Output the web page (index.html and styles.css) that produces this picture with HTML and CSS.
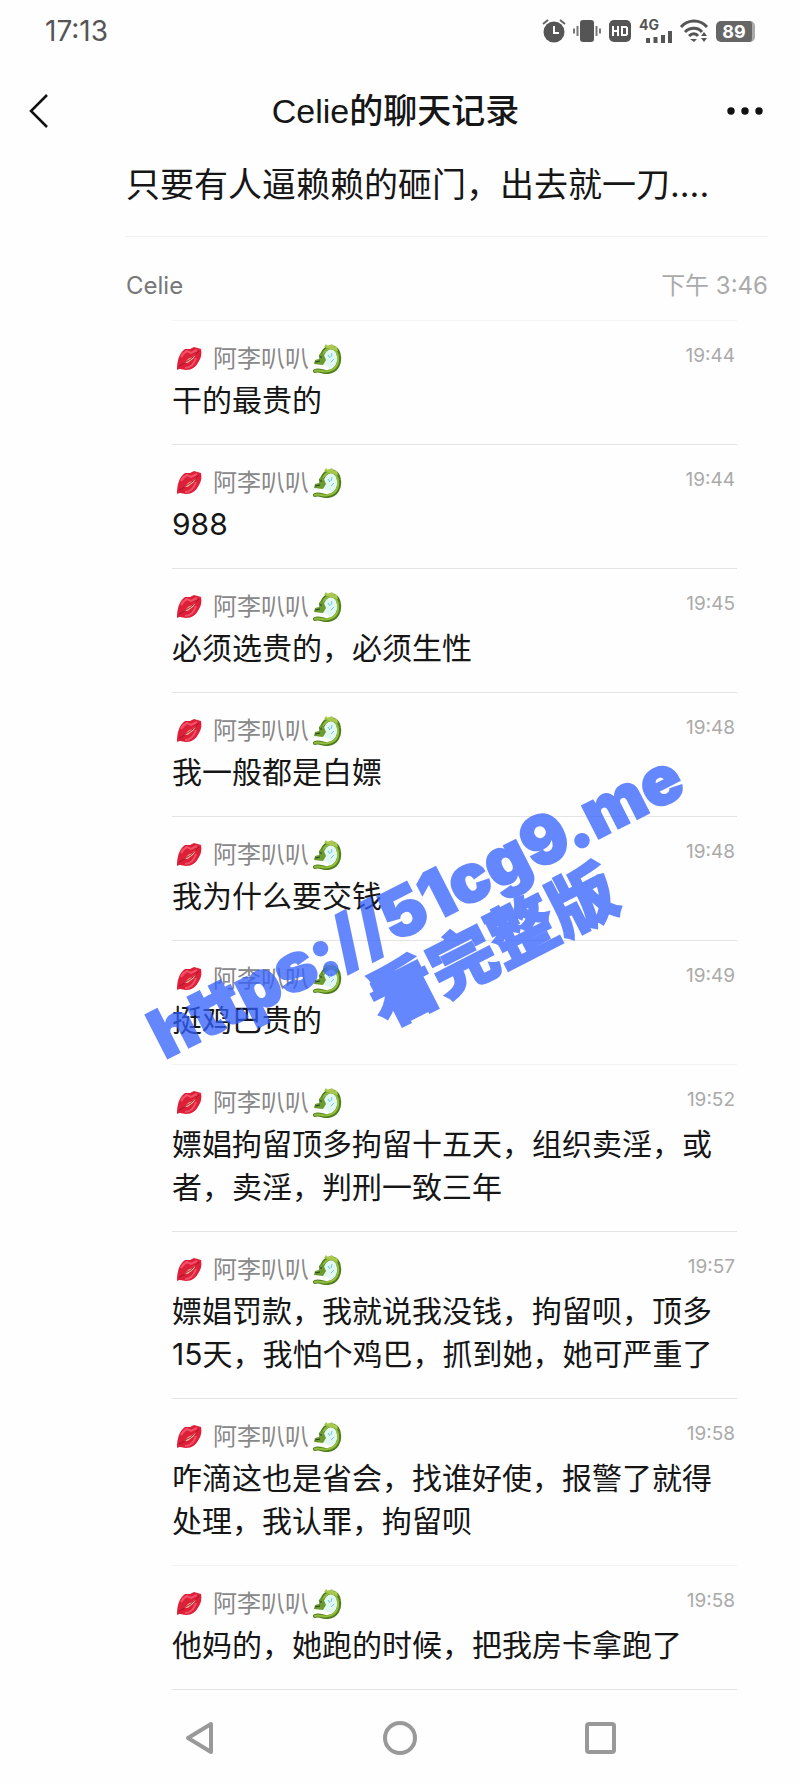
FILE: index.html
```html
<!DOCTYPE html>
<html lang="zh-CN">
<head>
<meta charset="utf-8">
<meta name="viewport" content="width=device-width, initial-scale=1">
<title>Celie的聊天记录</title>
<link rel="stylesheet" href="styles.css">
</head>
<body>
<svg class="sprite" aria-hidden="true">
  <symbol id="lips" viewBox="0 0 26 26">
    <path d="M1 24C1 15 3 7 9 3l5 0 4-2 7 2c1 5 0 9-2 12-3 6-7 9-13 9-4 0-5-2-9 0z" fill="#dd2038"/>
    <path d="M5 11c2-4 4-5 6-6l4 2 6-3M9 22c6 0 9-4 11-10" fill="none" stroke="#f3506a" stroke-width="2"/>
    <path d="M8 17c2-1 3-4 6-5 3 0 3-3 6-4-2 4-4 6-6 7-2 2-3 2-6 2z" fill="#f9c9a8"/>
    <path d="M3 20c4-1 7-5 10-6s5-5 10-9" fill="none" stroke="#a80f25"/>
  </symbol>
  <symbol id="dragon" viewBox="0 0 30 30">
    <path d="M11 7l11-3 4 11-6 10-9-4z" fill="#e2f7f2"/>
    <path d="M2 27c5-2 8 2 13 1 9-1 12-9 11-16C25 3 17 1 12 6c-2 2-2 4-4 6" fill="none" stroke="#4e7d1e" stroke-width="4" stroke-linecap="round"/>
    <path d="M2 27c5-2 8 2 13 0 8-1 11-8 10-14C24 4 17 2 13 6c-2 2-3 4-5 6" fill="none" stroke="#93bd3c" stroke-width="2" stroke-linecap="round"/>
    <path d="M10 9l3 7-3 5-9-1 1-4 4-1 1-5z" fill="#6b9a30"/>
    <path d="M2 18l5-1M7 13h2" stroke="#26431a" stroke-width="1"/>
    <path d="M15 11l2 3M19 9l-1 4M18 18l3-3" stroke="#68c8dd" stroke-width="1"/>
    <path d="M11 3l2-3 2 2 4-2 1 2 4 1 1 4z" fill="#a9c94c"/>
  </symbol>
</svg>

<div class="screen">
  <div class="status">
    <span>17:13</span>
    <div class="status-icons">
      <svg width="24" height="24" viewBox="0 0 24 24" aria-label="闹钟"><circle cx="12" cy="13" r="10.5" fill="#555"/><path d="M1 5l5-4M23 5l-5-4" stroke="#666" stroke-width="2"/><path d="M12 7v7h5" fill="none" stroke="#fff" stroke-width="2"/></svg>
      <svg width="28" height="24" viewBox="0 0 28 24" aria-label="振动"><rect x="7" y="1" width="14" height="22" rx="3" fill="#555"/><path d="M4.500 7v10M23.500 7v10M1 9.500v5M27 9.500v5" stroke="#777" stroke-width="2"/></svg>
      <svg width="24" height="24" viewBox="0 0 24 24" aria-label="HD"><rect x="1" y="1" width="22" height="22" rx="5" fill="#555"/><path d="M5 7v10M10 7v10M5 12h5M14 8h4l1 1v6l-1 1h-4z" fill="none" stroke="#fff" stroke-width="2"/></svg>
      <div class="signal"><span>4G</span><svg width="26" height="12" viewBox="0 0 26 12" aria-hidden="true"><path d="M2 12V7M9.500 12V6M17 12V4M24 12V0" stroke="#555" stroke-width="4"/></svg></div>
      <svg width="30" height="24" viewBox="0 0 30 24" aria-label="WLAN"><path d="M2 8c7-8 19-8 26 0M6 13c5-5 13-5 17 0M10 17c3-3 7-3 9 0" fill="none" stroke="#555" stroke-width="3"/><path d="M11 20h7l-3 3zM22 17l3-4 3 4zM22 19h6l-3 4z" fill="#555"/></svg>
      <div class="battery"><span>89</span></div>
    </div>
  </div>

  <header class="header">
    <button class="icon-button back" type="button" aria-label="返回"><svg width="20" height="36" viewBox="0 0 20 36"><path d="M18 2L2 18l16 16" fill="none" stroke="#111" stroke-width="2.500"/></svg></button>
    <h1 class="title">Celie的聊天记录</h1>
    <button class="icon-button" type="button" aria-label="更多"><svg width="38" height="10" viewBox="0 0 38 10" fill="#111"><circle cx="5" cy="5" r="3.700"/><circle cx="19" cy="5" r="3.700"/><circle cx="33" cy="5" r="3.700"/></svg></button>
  </header>

  <main class="record">
    <p class="lead">只要有人逼赖赖的砸门，出去就一刀....</p>
    <div class="sender"><span>Celie</span><time>下午 3:46</time></div>
    <ul class="list">
      <li class="item"><div class="meta"><span class="name"><svg class="lips"><use href="#lips"/></svg>阿李叭叭<svg class="dragon"><use href="#dragon"/></svg></span><time>19:44</time></div><p class="text">干的最贵的</p></li>
      <li class="item"><div class="meta"><span class="name"><svg class="lips"><use href="#lips"/></svg>阿李叭叭<svg class="dragon"><use href="#dragon"/></svg></span><time>19:44</time></div><p class="text">988</p></li>
      <li class="item"><div class="meta"><span class="name"><svg class="lips"><use href="#lips"/></svg>阿李叭叭<svg class="dragon"><use href="#dragon"/></svg></span><time>19:45</time></div><p class="text">必须选贵的，必须生性</p></li>
      <li class="item"><div class="meta"><span class="name"><svg class="lips"><use href="#lips"/></svg>阿李叭叭<svg class="dragon"><use href="#dragon"/></svg></span><time>19:48</time></div><p class="text">我一般都是白嫖</p></li>
      <li class="item"><div class="meta"><span class="name"><svg class="lips"><use href="#lips"/></svg>阿李叭叭<svg class="dragon"><use href="#dragon"/></svg></span><time>19:48</time></div><p class="text">我为什么要交钱</p></li>
      <li class="item faint"><div class="meta"><span class="name"><svg class="lips"><use href="#lips"/></svg>阿李叭叭<svg class="dragon"><use href="#dragon"/></svg></span><time>19:49</time></div><p class="text">挺鸡巴贵的</p></li>
      <li class="item"><div class="meta"><span class="name"><svg class="lips"><use href="#lips"/></svg>阿李叭叭<svg class="dragon"><use href="#dragon"/></svg></span><time>19:52</time></div><p class="text">嫖娼拘留顶多拘留十五天，组织卖淫，或者，卖淫，判刑一致三年</p></li>
      <li class="item"><div class="meta"><span class="name"><svg class="lips"><use href="#lips"/></svg>阿李叭叭<svg class="dragon"><use href="#dragon"/></svg></span><time>19:57</time></div><p class="text">嫖娼罚款，我就说我没钱，拘留呗，顶多15天，我怕个鸡巴，抓到她，她可严重了</p></li>
      <li class="item faint"><div class="meta"><span class="name"><svg class="lips"><use href="#lips"/></svg>阿李叭叭<svg class="dragon"><use href="#dragon"/></svg></span><time>19:58</time></div><p class="text">咋滴这也是省会，找谁好使，报警了就得处理，我认罪，拘留呗</p></li>
      <li class="item"><div class="meta"><span class="name"><svg class="lips"><use href="#lips"/></svg>阿李叭叭<svg class="dragon"><use href="#dragon"/></svg></span><time>19:58</time></div><p class="text">他妈的，她跑的时候，把我房卡拿跑了</p></li>
    </ul>
  </main>

  <nav class="nav">
    <button class="icon-button" type="button" aria-label="返回上一页"><svg width="32" height="34" viewBox="0 0 32 34"><path d="M27 3v28L4 17z" fill="none" stroke="#999" stroke-width="4" stroke-linejoin="round"/></svg></button>
    <button class="icon-button" type="button" aria-label="主页"><svg width="36" height="36" viewBox="0 0 36 36"><circle cx="18" cy="18" r="15" fill="none" stroke="#999" stroke-width="4"/></svg></button>
    <button class="icon-button" type="button" aria-label="最近任务"><svg width="34" height="36" viewBox="0 0 34 36"><rect x="4" y="4" width="27" height="28" rx="2" fill="none" stroke="#999" stroke-width="4"/></svg></button>
  </nav>

  <div class="watermark"><div>https://51cg9.me</div><div class="watermark-note">看完整版</div></div>
</div>
</body>
</html>
```
FILE: styles.css
```css
* { box-sizing: border-box; }

body {
  margin: 0;
  background: #fefefe;
  color: #161616;
  font-family: Inter, "Noto Sans CJK SC", sans-serif;
}

.sprite { position: absolute; width: 0; height: 0; }

.screen { position: relative; overflow: hidden; }

.status {
  display: flex;
  align-items: center;
  justify-content: space-between;
  height: 62px;
  padding: 0 45px;
  color: #555;
  font-size: 28px;
}

.status-icons { display: flex; align-items: center; gap: 7px; }

.signal {
  display: flex;
  flex-direction: column;
  width: 33px;
  font-size: 14px;
  font-weight: 700;
  line-height: 12px;
}

.signal svg { align-self: flex-end; }

.battery {
  width: 39px;
  height: 21px;
  border-right: 3px solid #aaa;
  border-radius: 5px;
  background: #666;
  color: #fff;
  font-size: 18px;
  font-weight: 700;
  line-height: 21px;
  text-align: center;
}

.header {
  display: flex;
  align-items: center;
  justify-content: space-between;
  height: 98px;
  padding: 0 36px 0 29px;
}

.icon-button {
  display: flex;
  align-items: center;
  justify-content: center;
  padding: 0;
  border: 0;
  background: none;
}

.back { justify-content: flex-start; width: 36px; }

.title {
  margin: 0;
  font-family: "Liberation Sans", "Noto Sans CJK SC", sans-serif;
  font-size: 34px;
  font-weight: 500;
  line-height: 48px;
}

.record { padding: 0 32px 0 126px; }

.lead {
  margin: 0;
  padding-bottom: 26px;
  border-bottom: 1px solid #f0f0f0;
  font-size: 34px;
  line-height: 50px;
  white-space: nowrap;
}

.sender {
  display: flex;
  align-items: center;
  justify-content: space-between;
  height: 83px;
  padding-top: 14px;
  color: #777;
  font-size: 24px;
  line-height: 32px;
}

.sender time { color: #aaa; }

.list {
  margin: 0 31px 0 46px;
  padding: 0;
  border-top: 1px solid #f4f4f4;
  list-style: none;
}

.item {
  padding: 20px 0 22px;
  border-bottom: 1px solid #e4e4e4;
}

.faint { border-color: #f3f3f3; }

.meta {
  display: flex;
  justify-content: space-between;
  height: 38px;
}

.meta time {
  padding-right: 2px;
  color: #aaa;
  font-size: 19px;
  line-height: 30px;
}

.name {
  display: flex;
  align-items: center;
  height: 36px;
  color: #888;
  font-size: 24px;
  line-height: 36px;
}

.lips { width: 26px; height: 26px; margin: 0 11px 0 4px; }

.dragon { width: 30px; height: 30px; margin-left: 4px; }

.text {
  margin: 0;
  font-size: 30px;
  line-height: 43px;
}

.nav {
  display: grid;
  grid-template-columns: repeat(3, 1fr);
  padding: 30px 100px 28px;
}

.watermark {
  position: absolute;
  top: 937px;
  left: 54%;
  transform: translate(-50%, -50%) rotate(-27deg);
  opacity: 0.75;
  color: #3360ff;
  -webkit-text-stroke: 2px #3360ff;
  font-family: Inter, "Noto Sans CJK SC", sans-serif;
  font-size: 67px;
  font-weight: 900;
  line-height: 72px;
  text-align: center;
  white-space: nowrap;
  pointer-events: none;
}

.watermark-note { padding-left: 100px; }
```
